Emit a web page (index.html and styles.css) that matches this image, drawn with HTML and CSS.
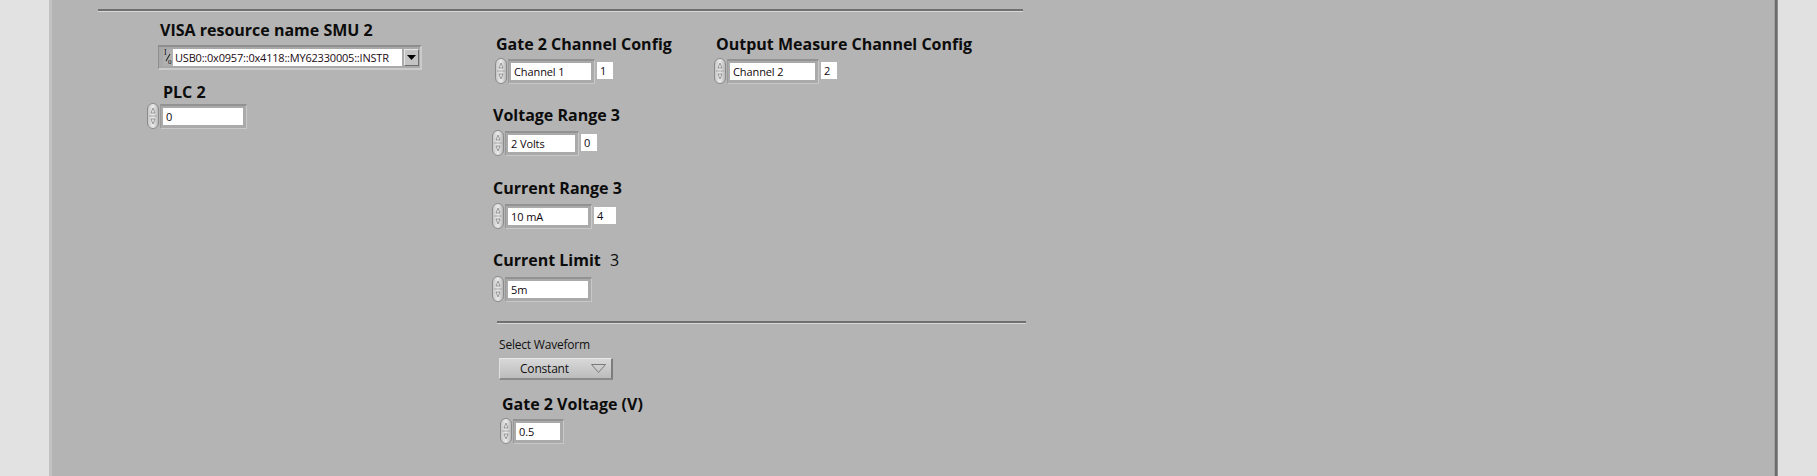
FILE: index.html
```html
<!DOCTYPE html>
<html>
<head>
<meta charset="utf-8">
<link rel="stylesheet" href="styles.css">
</head>
<body>
<div class="strip-left"></div>
<div class="panel">
  <div class="rule rule-top"></div>
  <div class="cols">
    <div class="col-a">
      <div class="label l-visa">VISA resource name SMU 2</div>
      <div class="visa">
        <div class="io"><span class="io-i">I</span><span class="io-o">0</span></div>
        <div class="visa-field">USB0::0x0957::0x4118::MY62330005::INSTR</div>
        <div class="visa-btn"><svg width="9" height="5" viewBox="0 0 9 5"><path d="M0 0H9L4.5 5Z" fill="#000"/></svg></div>
      </div>
      <div class="label l-plc">PLC 2</div>
      <div class="num n-plc">
        <div class="spin"><svg width="12" height="26" viewBox="0 0 12 26"><rect x="0.5" y="0.5" width="11" height="25" rx="5.5" fill="url(#g1)" stroke="#8a8a8a"/><path d="M6 5 L8 10 H4 Z" fill="none" stroke="#858585" stroke-width="0.8"/><path d="M2 13 H10" stroke="#9a9a9a" stroke-width="0.8"/><path d="M6 21 L8 16 H4 Z" fill="none" stroke="#858585" stroke-width="0.8"/><defs><linearGradient id="g1" x1="0" y1="0" x2="1" y2="0"><stop offset="0" stop-color="#c4c4c4"/><stop offset="0.5" stop-color="#ebebeb"/><stop offset="1" stop-color="#b4b4b4"/></linearGradient></defs></svg></div>
        <div class="frame"><div class="field w-plc">0</div></div>
      </div>
    </div>
    <div class="col-b">
      <div class="row1">
        <div class="grp grp1">
          <div class="label l-g2cc">Gate 2 Channel Config</div>
          <div class="num">
            <div class="spin"><svg width="12" height="26" viewBox="0 0 12 26"><rect x="0.5" y="0.5" width="11" height="25" rx="5.5" fill="url(#g1)" stroke="#8a8a8a"/><path d="M6 5 L8 10 H4 Z" fill="none" stroke="#858585" stroke-width="0.8"/><path d="M2 13 H10" stroke="#9a9a9a" stroke-width="0.8"/><path d="M6 21 L8 16 H4 Z" fill="none" stroke="#858585" stroke-width="0.8"/></svg></div>
            <div class="frame"><div class="field w-ch">Channel 1</div></div>
            <div class="idx w-i1">1</div>
          </div>
        </div>
        <div class="grp grp2">
          <div class="label l-omcc">Output Measure Channel Config</div>
          <div class="num">
            <div class="spin"><svg width="12" height="26" viewBox="0 0 12 26"><rect x="0.5" y="0.5" width="11" height="25" rx="5.5" fill="url(#g1)" stroke="#8a8a8a"/><path d="M6 5 L8 10 H4 Z" fill="none" stroke="#858585" stroke-width="0.8"/><path d="M2 13 H10" stroke="#9a9a9a" stroke-width="0.8"/><path d="M6 21 L8 16 H4 Z" fill="none" stroke="#858585" stroke-width="0.8"/></svg></div>
            <div class="frame"><div class="field w-ch2">Channel 2</div></div>
            <div class="idx w-i1">2</div>
          </div>
        </div>
      </div>

      <div class="label l-vr">Voltage Range 3</div>
      <div class="num n-vr">
        <div class="spin"><svg width="12" height="26" viewBox="0 0 12 26"><rect x="0.5" y="0.5" width="11" height="25" rx="5.5" fill="url(#g1)" stroke="#8a8a8a"/><path d="M6 5 L8 10 H4 Z" fill="none" stroke="#858585" stroke-width="0.8"/><path d="M2 13 H10" stroke="#9a9a9a" stroke-width="0.8"/><path d="M6 21 L8 16 H4 Z" fill="none" stroke="#858585" stroke-width="0.8"/></svg></div>
        <div class="frame"><div class="field w-vr">2 Volts</div></div>
        <div class="idx w-i1">0</div>
      </div>

      <div class="label l-cr">Current Range 3</div>
      <div class="num n-cr">
        <div class="spin"><svg width="12" height="26" viewBox="0 0 12 26"><rect x="0.5" y="0.5" width="11" height="25" rx="5.5" fill="url(#g1)" stroke="#8a8a8a"/><path d="M6 5 L8 10 H4 Z" fill="none" stroke="#858585" stroke-width="0.8"/><path d="M2 13 H10" stroke="#9a9a9a" stroke-width="0.8"/><path d="M6 21 L8 16 H4 Z" fill="none" stroke="#858585" stroke-width="0.8"/></svg></div>
        <div class="frame"><div class="field w-cr">10 mA</div></div>
        <div class="idx w-i2">4</div>
      </div>

      <div class="label l-cl">Current Limit <span class="plain">3</span></div>
      <div class="num n-cl">
        <div class="spin"><svg width="12" height="26" viewBox="0 0 12 26"><rect x="0.5" y="0.5" width="11" height="25" rx="5.5" fill="url(#g1)" stroke="#8a8a8a"/><path d="M6 5 L8 10 H4 Z" fill="none" stroke="#858585" stroke-width="0.8"/><path d="M2 13 H10" stroke="#9a9a9a" stroke-width="0.8"/><path d="M6 21 L8 16 H4 Z" fill="none" stroke="#858585" stroke-width="0.8"/></svg></div>
        <div class="frame"><div class="field w-cl">5m</div></div>
      </div>

      <div class="rule rule-mid"></div>

      <div class="small l-sw">Select Waveform</div>
      <div class="ring">
        <span class="ring-text">Constant</span>
        <svg class="ring-arrow" width="15" height="9" viewBox="0 0 15 9"><path d="M0.5 0.5 H14.5 L7.5 8.5 Z" fill="none" stroke="#7a7a7a"/></svg>
      </div>

      <div class="label l-g2v">Gate 2 Voltage (V)</div>
      <div class="num n-g2v">
        <div class="spin"><svg width="12" height="26" viewBox="0 0 12 26"><rect x="0.5" y="0.5" width="11" height="25" rx="5.5" fill="url(#g1)" stroke="#8a8a8a"/><path d="M6 5 L8 10 H4 Z" fill="none" stroke="#858585" stroke-width="0.8"/><path d="M2 13 H10" stroke="#9a9a9a" stroke-width="0.8"/><path d="M6 21 L8 16 H4 Z" fill="none" stroke="#858585" stroke-width="0.8"/></svg></div>
        <div class="frame"><div class="field w-g2v">0.5</div></div>
      </div>
    </div>
  </div>
</div>
<div class="edge-right"></div>
<div class="strip-right"></div>
</body>
</html>
```
FILE: styles.css
```css
html, body {
  margin: 0;
  padding: 0;
}
body {
  width: 1817px;
  height: 476px;
  overflow: hidden;
  display: flex;
  font-family: "Open Sans", "Noto Sans", sans-serif;
  color: #111;
  background: #b4b4b4;
}
.strip-left {
  width: 49px;
  background: #e2e2e2;
  border-right: 3px solid #c2c2c2;
  flex: none;
}
.panel {
  width: 1722px;
  flex: none;
  background: #b4b4b4;
  padding-top: 9px;
  box-sizing: border-box;
}
.edge-right {
  width: 4px;
  flex: none;
  background: linear-gradient(to right, #a0a0a0 0 1px, #6c6c6c 1px 3px, #8e8e8e 3px 4px);
}
.strip-right {
  flex: 1;
  background: #e1e1e1;
}
.rule {
  height: 2px;
  background: #707070;
  border-bottom: 1px solid #d8d8d8;
}
.rule-top {
  margin-left: 46px;
  width: 925px;
}
.rule-mid {
  margin-left: 5px;
  width: 529px;
  margin-top: 19px;
}
.cols {
  display: flex;
  padding-left: 96px;
}
.col-a {
  width: 344px;
  display: flex;
  flex-direction: column;
  align-items: flex-start;
}
.col-b {
  display: flex;
  flex-direction: column;
  align-items: flex-start;
}
.label {
  font-weight: 700;
  font-size: 16px;
  line-height: 20px;
  letter-spacing: 0;
  white-space: nowrap;
  color: #0c0c0c;
}
.label .plain {
  font-weight: 400;
  margin-left: 5px;
}
.small {
  font-size: 12px;
  line-height: 15px;
  white-space: nowrap;
  letter-spacing: -0.2px;
}
.l-visa { margin: 8px 0 0 12px; }
.l-plc { margin: 12px 0 0 15px; }
.l-g2cc { margin: 22px 0 0 1px; }
.l-omcc { margin: 22px 0 0 1px; }
.l-vr { margin: 21px 0 0 1px; }
.l-cr { margin: 22px 0 0 1px; }
.l-cl { margin: 21px 0 0 1px; }
.l-sw { margin: 13px 0 0 7px; }
.l-g2v { margin: 14px 0 0 10px; }

/* VISA control */
.visa {
  margin: 5px 0 0 10px;
  width: 264px;
  height: 25px;
  box-sizing: border-box;
  display: flex;
  align-items: center;
  padding: 0 5px 0 4px;
  background: #a9a9a9;
  border-top: 2px solid #8e8e8e;
  border-left: 1px solid #8e8e8e;
  border-right: 2px solid #cbcbcb;
  border-bottom: 2px solid #cbcbcb;
}
.io {
  width: 10px;
  height: 17px;
  position: relative;
  font-family: "Liberation Serif", serif;
  font-size: 8px;
  line-height: 8px;
  background: #b0b0b0;
  flex: none;
}
.io::after {
  content: "";
  position: absolute;
  left: 1px;
  top: 8px;
  width: 8px;
  height: 1px;
  background: #222;
  transform: rotate(-60deg);
}
.io-i { position: absolute; left: 1px; top: 0; }
.io-o { position: absolute; left: 5px; top: 9px; font-size: 7px; }
.visa-field {
  width: 229px;
  height: 17px;
  background: #fff;
  font-size: 11px;
  line-height: 17px;
  padding-left: 2px;
  box-sizing: border-box;
  color: #1c0a12;
  white-space: nowrap;
  overflow: hidden;
  letter-spacing: -0.2px;
  flex: none;
}
.visa-btn {
  margin-left: 2px;
  width: 15px;
  height: 17px;
  box-sizing: border-box;
  background: #c4c4c4;
  border-top: 1px solid #e6e6e6;
  border-left: 1px solid #e6e6e6;
  border-right: 1px solid #6e6e6e;
  border-bottom: 1px solid #6e6e6e;
  display: flex;
  align-items: center;
  justify-content: center;
  flex: none;
}

/* numeric controls */
.num {
  display: flex;
  align-items: center;
  margin-top: 4px;
}
.n-plc { margin: 1px 0 0 -1px; }
.n-vr { margin-top: 5px; }
.n-cr { margin-top: 5px; }
.n-cl { margin-top: 6px; }
.n-g2v { margin: 4px 0 0 8px; }
.grp1 .num { margin-left: 0; }
.grp2 .num { margin-left: -1px; }
.spin {
  width: 12px;
  height: 26px;
  flex: none;
}
.spin svg { display: block; }
.frame {
  padding: 2px 3px 3px 2px;
  background: #aaaaaa;
  border-top: 2px solid #929292;
  border-left: 1px solid #9a9a9a;
  border-right: 1px solid #c8c8c8;
  border-bottom: 1px solid #c8c8c8;
  margin-left: 1px;
}
.field {
  height: 17px;
  background: #fff;
  font-size: 11px;
  line-height: 17px;
  padding-left: 3px;
  box-sizing: border-box;
  color: #10070c;
  white-space: nowrap;
  letter-spacing: -0.1px;
}
.w-plc { width: 80px; }
.w-ch { width: 80px; }
.w-ch2 { width: 85px; }
.w-vr { width: 67px; }
.w-cr { width: 80px; }
.w-cl { width: 80px; }
.w-g2v { width: 44px; }
.idx {
  margin-left: 2px;
  height: 17px;
  background: #fff;
  font-size: 11px;
  line-height: 17px;
  padding-left: 3px;
  box-sizing: border-box;
  color: #10070c;
  position: relative;
  top: -1px;
}
.w-i1 { width: 16px; }
.w-i2 { width: 22px; }

.row1 {
  display: flex;
}
.grp {
  display: flex;
  flex-direction: column;
  align-items: flex-start;
}
.grp1 { width: 220px; margin-left: 3px; }

/* ring */
.ring {
  margin: 6px 0 0 7px;
  width: 114px;
  height: 22px;
  box-sizing: border-box;
  background: linear-gradient(#d8d8d8, #bcbcbc);
  border-top: 1px solid #e8e8e8;
  border-left: 1px solid #e0e0e0;
  border-right: 2px solid #7c7c7c;
  border-bottom: 2px solid #8a8a8a;
  display: flex;
  align-items: center;
  font-size: 12px;
  color: #111;
}
.ring-text {
  margin-left: 20px;
  letter-spacing: -0.2px;
}
.ring-arrow {
  margin-left: auto;
  margin-right: 5px;
}
```
